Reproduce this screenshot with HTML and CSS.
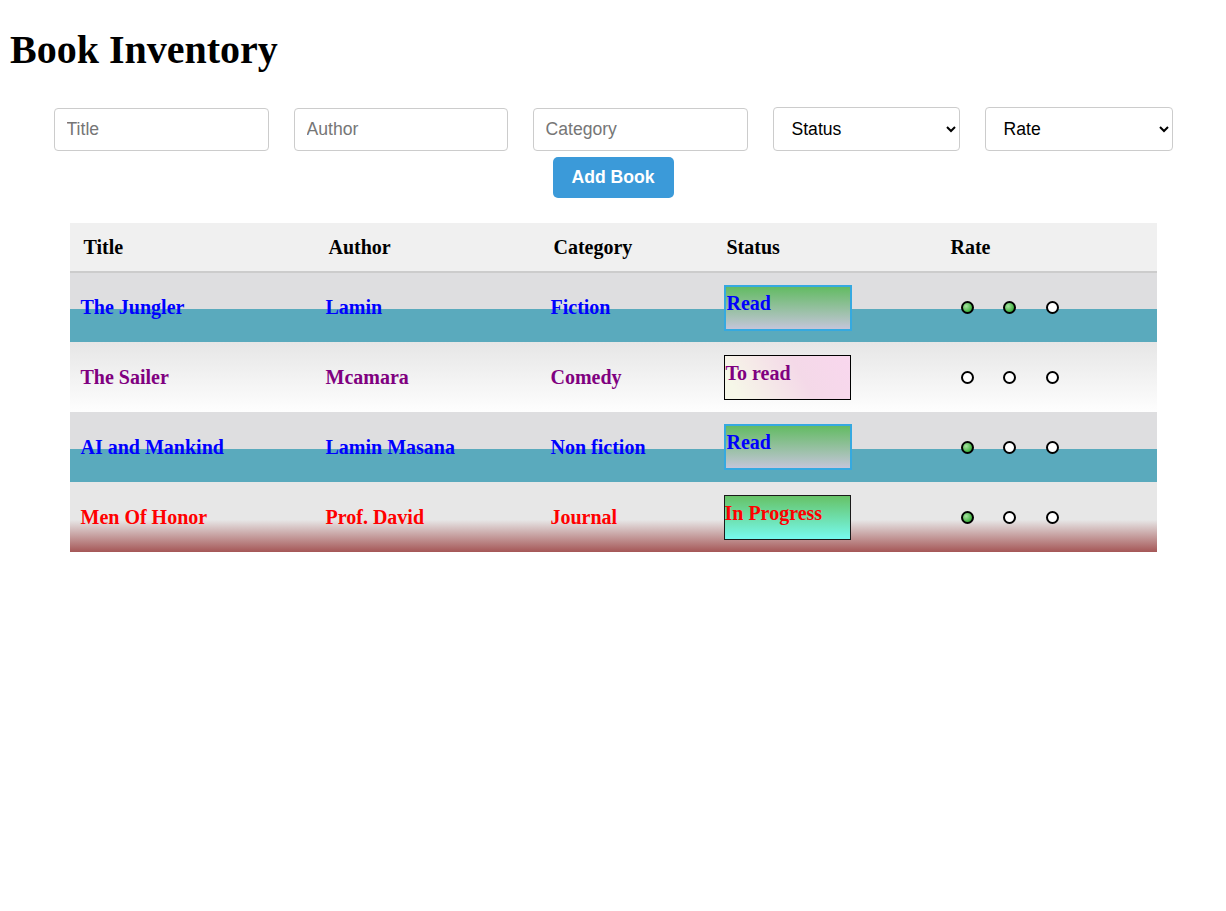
FILE: index.html
```
<!DOCTYPE html>
<html lang="en">
<head>
<meta charset="utf-8">
<title>Book Inventory</title>
<link rel="stylesheet" href="styles.css">
</head>
<body>
<h1 class="page-title">Book Inventory</h1>
<form class="book-form">
  <input class="field field-title" type="text" placeholder="Title">
  <input class="field field-author" type="text" placeholder="Author">
  <input class="field field-category" type="text" placeholder="Category">
  <select class="field select select-status"><option>Status</option></select>
  <select class="field select select-rate"><option>Rate</option></select>
  <div class="form-break"></div>
  <button class="add-btn" type="button">Add Book</button>
</form>
<table class="books">
  <thead>
    <tr>
      <th class="c-title">Title</th>
      <th class="c-author">Author</th>
      <th class="c-cat">Category</th>
      <th class="c-status">Status</th>
      <th class="c-rate">Rate</th>
    </tr>
  </thead>
  <tbody>
    <tr class="row row-read">
      <td>The Jungler</td>
      <td>Lamin</td>
      <td>Fiction</td>
      <td><div class="status status-read">Read</div></td>
      <td><div class="rating"><span class="dot on"></span><span class="dot on"></span><span class="dot"></span></div></td>
    </tr>
    <tr class="row row-toread">
      <td>The Sailer</td>
      <td>Mcamara</td>
      <td>Comedy</td>
      <td><div class="status status-toread">To read</div></td>
      <td><div class="rating"><span class="dot"></span><span class="dot"></span><span class="dot"></span></div></td>
    </tr>
    <tr class="row row-read">
      <td>AI and Mankind</td>
      <td>Lamin Masana</td>
      <td>Non fiction</td>
      <td><div class="status status-read">Read</div></td>
      <td><div class="rating"><span class="dot on"></span><span class="dot"></span><span class="dot"></span></div></td>
    </tr>
    <tr class="row row-progress">
      <td>Men Of Honor</td>
      <td>Prof. David</td>
      <td>Journal</td>
      <td><div class="status status-progress">In Progress</div></td>
      <td><div class="rating"><span class="dot on"></span><span class="dot"></span><span class="dot"></span></div></td>
    </tr>
  </tbody>
</table>
</body>
</html>
```
FILE: styles.css
```
body {
  margin: 8px;
  font-family: "Liberation Serif", "Times New Roman", serif;
  background: #ffffff;
}

.page-title {
  font-size: 40px;
  font-weight: bold;
  margin: 19px 0 27px 0;
  padding-left: 2px;
  line-height: 46px;
}

.book-form {
  display: flex;
  flex-wrap: wrap;
  justify-content: center;
  align-items: flex-end;
  column-gap: 25px;
  row-gap: 0;
  padding-top: 7px;
}

.field {
  box-sizing: border-box;
  height: 43px;
  border: 1px solid #cccccc;
  border-radius: 4px;
  padding: 0 12px;
  font-family: "Liberation Sans", Arial, sans-serif;
  font-size: 17.6px;
  color: #000;
  background: #fff;
  margin: 0;
}

.field::placeholder {
  color: #767676;
}

.field-title { width: 215px; }
.field-author { width: 214px; }
.field-category { width: 215px; }

.select {
  height: 44px;
  padding-left: 14px;
}
.select-status { width: 187px; }
.select-rate { width: 188px; }

.form-break {
  flex-basis: 100%;
  height: 0;
}

.add-btn {
  box-sizing: border-box;
  width: 121px;
  height: 41px;
  margin-top: 6px;
  border: none;
  border-radius: 5px;
  background: #3b9ad9;
  color: #ffffff;
  font-family: "Liberation Sans", Arial, sans-serif;
  font-size: 17.6px;
  font-weight: bold;
  padding: 0;
}

.books {
  width: 1087px;
  margin: 25px auto 0 auto;
  border-collapse: collapse;
  table-layout: fixed;
  font-size: 20px;
  font-weight: bold;
}

.books th {
  box-sizing: border-box;
  height: 49px;
  background: #f0f0f0;
  border-bottom: 2px solid #cccccc;
  text-align: left;
  padding: 0 0 0 14px;
  vertical-align: middle;
  color: #000;
}

.c-title { width: 245px; }
.c-author { width: 225px; }
.c-cat { width: 173px; }
.c-status { width: 224px; }
.c-rate { width: 220px; }

.books td {
  height: 70px;
  padding: 0 0 0 11px;
  vertical-align: middle;
  box-sizing: border-box;
}

.row-read {
  background: linear-gradient(to bottom, #dedee0 53%, #5aaabd 53%);
  color: #0000ff;
}

.row-toread {
  background: linear-gradient(to bottom, #e6e6e6, #fefefe);
  color: #800080;
}

.row-progress {
  background: linear-gradient(to bottom, #e7e7e7 54%, #a55757 100%);
  color: #ff0000;
}

.status {
  box-sizing: border-box;
  line-height: 23px;
}

.status-read {
  width: 128px;
  height: 46px;
  border: 2px solid #35a9e0;
  padding: 5px 0 0 1px;
  background: linear-gradient(to bottom, #63bb63, #c4c5d9);
}

.status-toread {
  width: 127px;
  height: 45px;
  border: 1px solid #000000;
  padding: 6px 0 0 1px;
  background: linear-gradient(60deg, #f6f7e8 10%, #f4d9e8 60%, #f9d7ee);
}

.status-progress {
  width: 127px;
  height: 45px;
  border: 1px solid #1a1a1a;
  padding: 6px 0 0 0;
  background: linear-gradient(to bottom, #66c266, #76faef);
}

.rating {
  display: flex;
  gap: 29.5px;
  padding-left: 13px;
  align-items: center;
}

.dot {
  box-sizing: border-box;
  width: 13px;
  height: 13px;
  border-radius: 50%;
  border: 2px solid #000;
  background: #fff;
}

.dot.on {
  background: radial-gradient(circle at 35% 35%, #a9e3a2, #3aae3a 75%);
}
```
